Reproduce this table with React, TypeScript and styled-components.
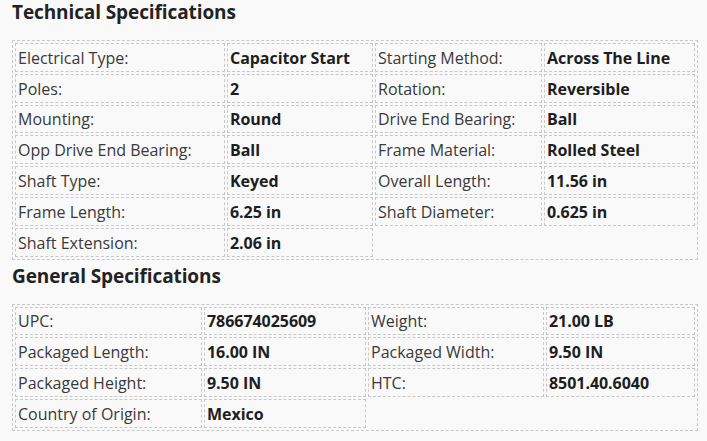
import React from "react";
import styled, { createGlobalStyle } from "styled-components";

const Global = createGlobalStyle`
  html, body { margin: 0; padding: 0; background: #f9f9f9; }
  body { font-family: "Open Sans", "Noto Sans", sans-serif; color: #222; }
`;

const Page = styled.div`
  padding: 0 10px 0 12px;
  width: 707px;
  box-sizing: border-box;
`;

const Heading = styled.h2`
  margin: 0;
  padding-top: 1px;
  font-size: 19px;
  line-height: 23px;
  font-weight: 700;
  color: #222;
  letter-spacing: -0.1px;
`;

const SpecGrid = styled.div<{ $cols: string }>`
  display: grid;
  grid-template-columns: ${(p) => p.$cols};
  gap: 2px;
  padding: 2px;
  border: 1px dashed #c8c8c8;
  margin: 16px 0 4px;
  width: max-content;
`;

const Cell = styled.div<{ $value?: boolean }>`
  border: 1px dashed #c8c8c8;
  box-sizing: border-box;
  height: 28.8px;
  padding: 1px 2px 0;
  display: flex;
  align-items: center;
  font-size: 16px;
  white-space: nowrap;
  letter-spacing: ${(p) => (p.$value ? "-0.05px" : "0")};
  font-weight: ${(p) => (p.$value ? 700 : 400)};
  color: ${(p) => (p.$value ? "#1e1e1e" : "#3a3a3a")};
`;

type Pair = [string, string];

const technical: Pair[] = [
  ["Electrical Type:", "Capacitor Start"],
  ["Starting Method:", "Across The Line"],
  ["Poles:", "2"],
  ["Rotation:", "Reversible"],
  ["Mounting:", "Round"],
  ["Drive End Bearing:", "Ball"],
  ["Opp Drive End Bearing:", "Ball"],
  ["Frame Material:", "Rolled Steel"],
  ["Shaft Type:", "Keyed"],
  ["Overall Length:", "11.56 in"],
  ["Frame Length:", "6.25 in"],
  ["Shaft Diameter:", "0.625 in"],
  ["Shaft Extension:", "2.06 in"],
];

const general: Pair[] = [
  ["UPC:", "786674025609"],
  ["Weight:", "21.00 LB"],
  ["Packaged Length:", "16.00 IN"],
  ["Packaged Width:", "9.50 IN"],
  ["Packaged Height:", "9.50 IN"],
  ["HTC:", "8501.40.6040"],
  ["Country of Origin:", "Mexico"],
];

function Specs({ items, cols }: { items: Pair[]; cols: string }) {
  return (
    <SpecGrid $cols={cols}>
      {items.map(([k, v]) => (
        <React.Fragment key={k}>
          <Cell>{k}</Cell>
          <Cell $value>{v}</Cell>
        </React.Fragment>
      ))}
    </SpecGrid>
  );
}

export default function App() {
  return (
    <Page>
      <Global />
      <Heading>Technical Specifications</Heading>
      <Specs items={technical} cols="210px 146px 167px 151px" />
      <Heading>General Specifications</Heading>
      <Specs items={general} cols="187px 162px 176px 149px" />
    </Page>
  );
}
